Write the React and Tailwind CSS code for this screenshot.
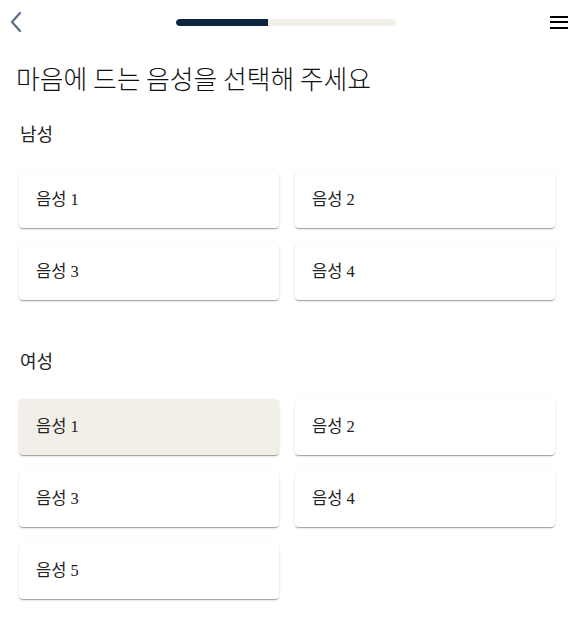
import React from 'react';

const male = ['음성 1', '음성 2', '음성 3', '음성 4'];
const female = ['음성 1', '음성 2', '음성 3', '음성 4', '음성 5'];

function VoiceCard({ label, selected }) {
  return (
    <button
      className={
        'h-14 rounded-[4px] px-[17px] text-left text-[16.5px] text-[#222] shadow-[0_2px_1px_-1px_rgba(0,0,0,0.2),0_1px_1px_0_rgba(0,0,0,0.14),0_1px_3px_0_rgba(0,0,0,0.12)] ' +
        (selected ? 'bg-[#f2efe9]' : 'bg-white')
      }
    >
      {label}
    </button>
  );
}

function Section({ title, items, selectedIndex }) {
  return (
    <section>
      <h2 className="pl-[1px] text-[18px] leading-[26px] text-[#222]">{title}</h2>
      <div className="mt-[24px] grid grid-cols-2 gap-4">
        {items.map((item, i) => (
          <VoiceCard key={i} label={item} selected={i === selectedIndex} />
        ))}
      </div>
    </section>
  );
}

export default function App() {
  return (
    <div
      className="min-h-screen bg-white"
      style={{ fontFamily: '"Liberation Serif", "Noto Sans CJK KR", serif' }}
    >
      <header className="flex h-[44px] items-center justify-between px-[8px]">
        <button className="flex h-[24px] w-[16px] items-center justify-center">
          <svg width="14" height="22" viewBox="0 0 14 22" fill="none">
            <path d="M11 2 L3 11 L11 20" stroke="#5b6b86" strokeWidth="2.2" strokeLinecap="round" strokeLinejoin="round" />
          </svg>
        </button>
        <div className="ml-[152px] flex h-[7px] w-[220px] overflow-hidden rounded-full bg-[#f3efe9]">
          <div className="h-full rounded-l-full bg-[#0b2540]" style={{ width: '42%' }} />
        </div>
        <div className="flex-1" />
        <button className="mr-[1px] flex flex-col gap-[3.5px]">
          <span className="block h-[2px] w-[18px] bg-black" />
          <span className="block h-[2px] w-[18px] bg-black" />
          <span className="block h-[2px] w-[18px] bg-black" />
        </button>
      </header>

      <main className="px-[19px] pr-[22px]">
        <h1
          className="-ml-[3px] mt-[17px] text-[25.8px] font-light leading-[34px] text-[#111]"
          style={{ fontFamily: '"Noto Sans CJK KR", sans-serif' }}
        >
          마음에 드는 음성을 선택해 주세요
        </h1>
        <div className="mt-[27px]">
          <Section title="남성" items={male} selectedIndex={-1} />
        </div>
        <div className="mt-[49px]">
          <Section title="여성" items={female} selectedIndex={0} />
        </div>
      </main>
    </div>
  );
}
